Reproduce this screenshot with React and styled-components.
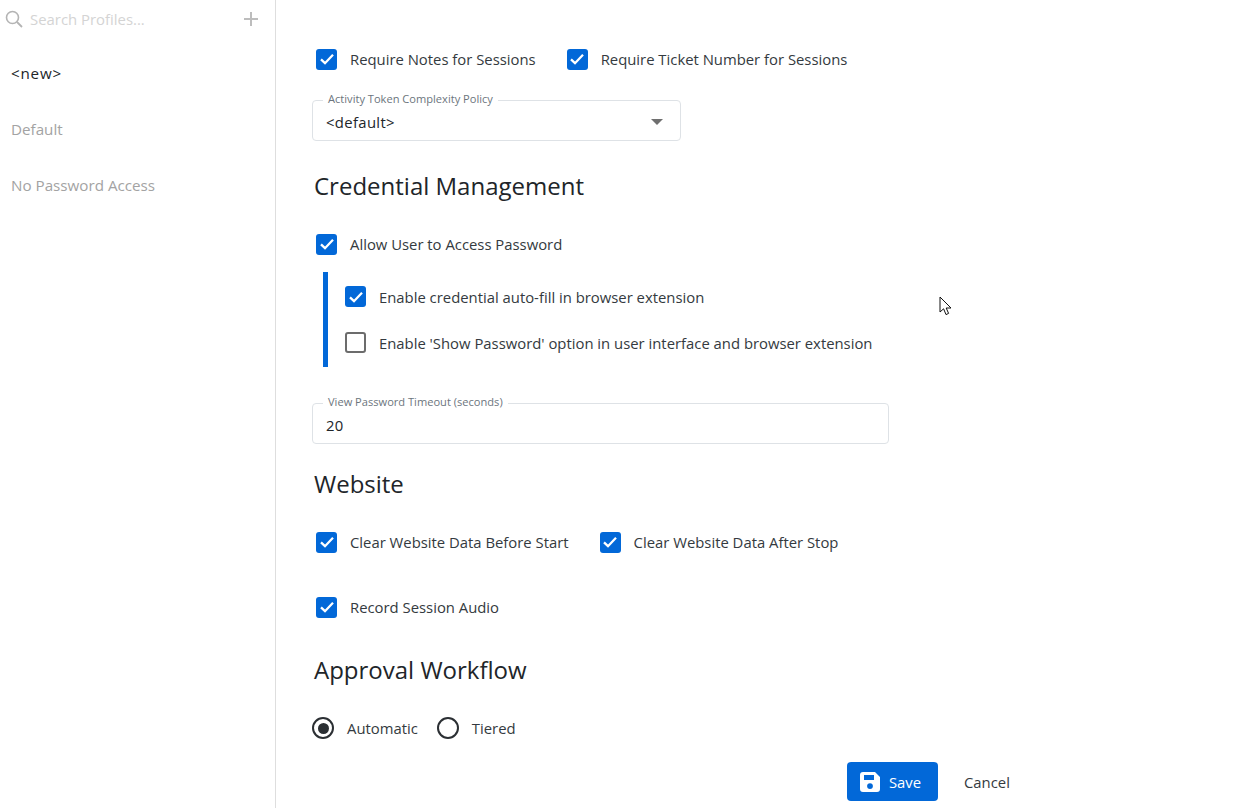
import React from "react";
import styled, { createGlobalStyle } from "styled-components";

const GlobalStyle = createGlobalStyle`
  html, body {
    margin: 0;
    padding: 0;
    background: #fff;
    font-family: "Open Sans", "Noto Sans", sans-serif;
    color: #212529;
  }
  * { box-sizing: border-box; }
`;

function Check({ label, checked = true }) {
  return (
    <CheckLabel>
      <Box checked={checked}>
        {checked && (
          <svg width="16" height="16" viewBox="0 0 16 16">
            <path d="M2 8.4 L6 12.2 L14 3.8" fill="none" stroke="#fff" strokeWidth="2.3" />
          </svg>
        )}
      </Box>
      <span>{label}</span>
    </CheckLabel>
  );
}

function Field({ label, value, children, width }) {
  return (
    <FieldSet width={width}>
      <Legend>{label}</Legend>
      <FieldValue>{value}</FieldValue>
      {children}
    </FieldSet>
  );
}

function SaveIcon() {
  return (
    <svg width="20" height="20" viewBox="0 0 20 20">
      <path
        fillRule="evenodd"
        fill="#fff"
        d="M3 0 H15 L20 5 V17 Q20 20 17 20 H3 Q0 20 0 17 V3 Q0 0 3 0 Z M4 3 V8 H14 V3 Z M10 11.2 A2.9 2.9 0 1 0 10 17 A2.9 2.9 0 1 0 10 11.2 Z"
      />
    </svg>
  );
}

export default function App() {
  return (
    <>
      <GlobalStyle />
      <Page>
        <Sidebar>
          <SearchBar>
            <svg width="18" height="18" viewBox="0 0 18 18">
              <circle cx="7.5" cy="7.5" r="6" fill="none" stroke="#b4b4b4" strokeWidth="1.6" />
              <path d="M12 12 L17 17" stroke="#b4b4b4" strokeWidth="1.8" />
            </svg>
            <SearchText>Search Profiles...</SearchText>
            <svg width="14" height="14" viewBox="0 0 14 14">
              <path d="M7 0 V14 M0 7 H14" stroke="#bdbdbd" strokeWidth="2" />
            </svg>
          </SearchBar>
          <ProfileList>
            <Profile active>&lt;new&gt;</Profile>
            <Profile>Default</Profile>
            <Profile>No Password Access</Profile>
          </ProfileList>
        </Sidebar>
        <Main>
          <CheckRow height={40} top={39}>
            <Check label="Require Notes for Sessions" />
            <Check label="Require Ticket Number for Sessions" />
          </CheckRow>
          <SelectWrap>
            <Field label="Activity Token Complexity Policy" value="<default>" width={369}>
              <Caret />
            </Field>
          </SelectWrap>
          <Heading top={28}>Credential Management</Heading>
          <CheckRow height={40} top={21}>
            <Check label="Allow User to Access Password" />
          </CheckRow>
          <Nested>
            <Check label="Enable credential auto-fill in browser extension" />
            <Check label="Enable 'Show Password' option in user interface and browser extension" checked={false} />
          </Nested>
          <SelectWrap top={36}>
            <Field label="View Password Timeout (seconds)" value="20" width={577} />
          </SelectWrap>
          <Heading top={23}>Website</Heading>
          <CheckRow height={40} top={21}>
            <Check label="Clear Website Data Before Start" />
            <Check label="Clear Website Data After Stop" />
          </CheckRow>
          <CheckRow height={40} top={25}>
            <Check label="Record Session Audio" />
          </CheckRow>
          <Heading top={26}>Approval Workflow</Heading>
          <RadioRow>
            <RadioLabel>
              <Radio on />
              Automatic
            </RadioLabel>
            <RadioLabel>
              <Radio />
              Tiered
            </RadioLabel>
          </RadioRow>
          <Actions>
            <SaveButton>
              <SaveIcon />
              Save
            </SaveButton>
            <CancelButton>Cancel</CancelButton>
          </Actions>
        </Main>
        <Cursor width="14" height="21" viewBox="0 0 14 21">
          <path d="M1 1 V16 L4.6 12.8 L7 18.6 L9.6 17.4 L7.2 12 L12 12 Z" fill="#fff" stroke="#111" strokeWidth="1" />
        </Cursor>
      </Page>
    </>
  );
}

const Page = styled.div`
  position: relative;
  display: flex;
  width: 1248px;
  height: 808px;
  overflow: hidden;
`;

const Sidebar = styled.aside`
  width: 276px;
  height: 808px;
  border-right: 1px solid #dedede;
  flex-shrink: 0;
`;

const SearchBar = styled.div`
  display: flex;
  align-items: center;
  height: 38px;
  padding: 0 17px 0 5px;
`;

const SearchText = styled.span`
  flex: 1;
  margin-left: 7px;
  font-size: 14.9px;
  color: #d4d4d4;
`;

const ProfileList = styled.div`
  padding-top: 7px;
`;

const Profile = styled.div`
  height: 56px;
  padding-left: 11px;
  display: flex;
  align-items: center;
  font-size: 15.2px;
  letter-spacing: ${(props) => (props.active ? "0.8px" : "0")};
  color: ${(props) => (props.active ? "#212529" : "#a3a3a3")};
`;

const Main = styled.main`
  flex: 1;
  padding-left: 36px;
`;

const CheckRow = styled.div`
  display: flex;
  align-items: center;
  gap: 31px;
  height: ${(props) => props.height}px;
  margin-top: ${(props) => props.top}px;
  padding-left: 4px;
`;

const CheckLabel = styled.label`
  display: flex;
  align-items: center;
  gap: 13px;
  font-size: 14.85px;
  color: #343a40;
  white-space: nowrap;
`;

const Box = styled.span`
  display: flex;
  align-items: center;
  justify-content: center;
  width: 21px;
  height: 21px;
  border-radius: 3px;
  background: ${(props) => (props.checked ? "#0268d8" : "#fff")};
  border: ${(props) => (props.checked ? "none" : "2px solid #6c6c6c")};
`;

const SelectWrap = styled.div`
  margin-top: ${(props) => props.top || 21}px;
`;

const FieldSet = styled.div`
  position: relative;
  width: ${(props) => props.width}px;
  height: 41px;
  border: 1px solid #dee2e6;
  border-radius: 4px;
  display: flex;
  align-items: center;
  padding: 2px 13px 0;
`;

const Legend = styled.span`
  position: absolute;
  top: -9px;
  left: 10px;
  padding: 0 5px;
  background: #fff;
  font-size: 11.1px;
  line-height: 14px;
  color: #6c757d;
  white-space: nowrap;
`;

const FieldValue = styled.span`
  flex: 1;
  font-size: 14.85px;
  letter-spacing: 0.35px;
  color: #212529;
`;

const Caret = styled.span`
  width: 0;
  height: 0;
  margin-right: 4px;
  border-left: 6.5px solid transparent;
  border-right: 6.5px solid transparent;
  border-top: 6.5px solid #6f6f6f;
`;

const Heading = styled.h2`
  margin: ${(props) => props.top}px 0 0 2px;
  height: 34px;
  line-height: 34px;
  font-size: 24px;
  font-weight: 400;
  color: #212529;
`;

const Nested = styled.div`
  display: flex;
  flex-direction: column;
  justify-content: space-between;
  width: max-content;
  height: 95px;
  margin: 8px 0 0 11px;
  padding: 14px 0 14px 17px;
  border-left: 5px solid #0268d8;
`;

const RadioRow = styled.div`
  display: flex;
  align-items: center;
  gap: 19px;
  height: 40px;
  margin-top: 21px;
`;

const RadioLabel = styled.label`
  display: flex;
  align-items: center;
  gap: 13px;
  font-size: 14.85px;
  color: #343a40;
`;

const Radio = styled.span`
  position: relative;
  width: 22px;
  height: 22px;
  border-radius: 50%;
  border: 2.5px solid #2b2f33;
  &::after {
    content: "";
    display: ${(props) => (props.on ? "block" : "none")};
    position: absolute;
    inset: 3.5px;
    border-radius: 50%;
    background: #2b2f33;
  }
`;

const Actions = styled.div`
  display: flex;
  align-items: center;
  height: 39px;
  margin: 14px 0 0 535px;
`;

const SaveButton = styled.button`
  display: flex;
  align-items: center;
  justify-content: center;
  gap: 9px;
  width: 91px;
  height: 39px;
  padding: 0 4px 0 0;
  border: none;
  border-radius: 4px;
  background: #0268d8;
  color: #fff;
  font: inherit;
  font-size: 14.85px;
`;

const CancelButton = styled.button`
  margin-left: 26px;
  padding: 0;
  border: none;
  background: none;
  font: inherit;
  font-size: 14.85px;
  color: #343a40;
`;

const Cursor = styled.svg`
  position: absolute;
  left: 939px;
  top: 296px;
`;
